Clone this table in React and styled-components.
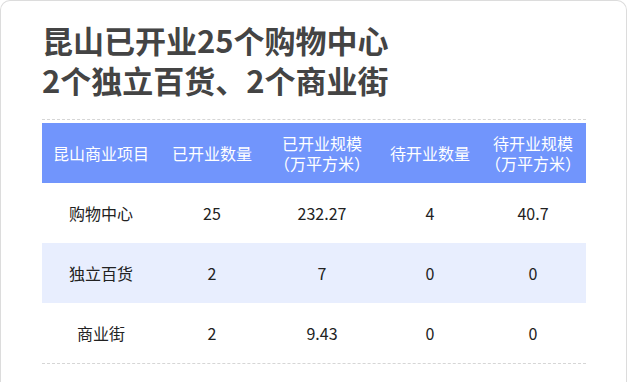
import React from 'react';
import styled, { createGlobalStyle } from 'styled-components';

const GlobalStyle = createGlobalStyle`
  html, body {
    margin: 0;
    padding: 0;
    background: #fff;
  }
  body {
    font-family: "Noto Sans CJK SC", "Noto Sans", sans-serif;
  }
`;

const Card = styled.div`
  box-sizing: border-box;
  width: 627px;
  min-height: 400px;
  border: 1px solid #dcdcdc;
  border-bottom: none;
  border-radius: 10px 10px 0 0;
  padding: 19px 40px 0 41px;
  background: #fff;
`;

const Title = styled.h1`
  margin: 0;
  font-size: 31px;
  line-height: 40px;
  font-weight: 700;
  color: #444;
`;

const TableWrap = styled.div`
  margin-top: 19px;
  padding-top: 3px;
  border-top: 1px dashed #d6d6d6;
  border-bottom: 1px dashed #d6d6d6;
`;

const Table = styled.table`
  width: 100%;
  border-collapse: collapse;
  table-layout: fixed;
`;

const HeadRow = styled.tr`
  background: #7195fc;
  height: 60px;
`;

const HeadCell = styled.th`
  padding: 0;
  font-size: 16px;
  line-height: 20px;
  font-weight: 400;
  color: #fff;
  text-align: center;
  width: ${p => p.$w}px;
`;

const Row = styled.tr`
  height: 60px;
  background: ${p => (p.$striped ? '#e8eefe' : '#fff')};
`;

const Cell = styled.td`
  padding: 0;
  font-size: 16px;
  color: #222;
  text-align: center;
`;

const columns = [
  { w: 118, label: ['昆山商业项目'] },
  { w: 104, label: ['已开业数量'] },
  { w: 116, label: ['已开业规模', '（万平方米）'] },
  { w: 100, label: ['待开业数量'] },
  { w: 106, label: ['待开业规模', '（万平方米）'] },
];

const rows = [
  ['购物中心', '25', '232.27', '4', '40.7'],
  ['独立百货', '2', '7', '0', '0'],
  ['商业街', '2', '9.43', '0', '0'],
];

export default function App() {
  return (
    <>
      <GlobalStyle />
      <Card>
        <Title>
          昆山已开业25个购物中心
          <br />
          2个独立百货、2个商业街
        </Title>
        <TableWrap>
          <Table>
            <thead>
              <HeadRow>
                {columns.map((c, i) => (
                  <HeadCell key={i} $w={c.w}>
                    {c.label.map((l, j) => (
                      <div key={j}>{l}</div>
                    ))}
                  </HeadCell>
                ))}
              </HeadRow>
            </thead>
            <tbody>
              {rows.map((r, i) => (
                <Row key={i} $striped={i % 2 === 1}>
                  {r.map((v, j) => (
                    <Cell key={j}>{v}</Cell>
                  ))}
                </Row>
              ))}
            </tbody>
          </Table>
        </TableWrap>
      </Card>
    </>
  );
}
